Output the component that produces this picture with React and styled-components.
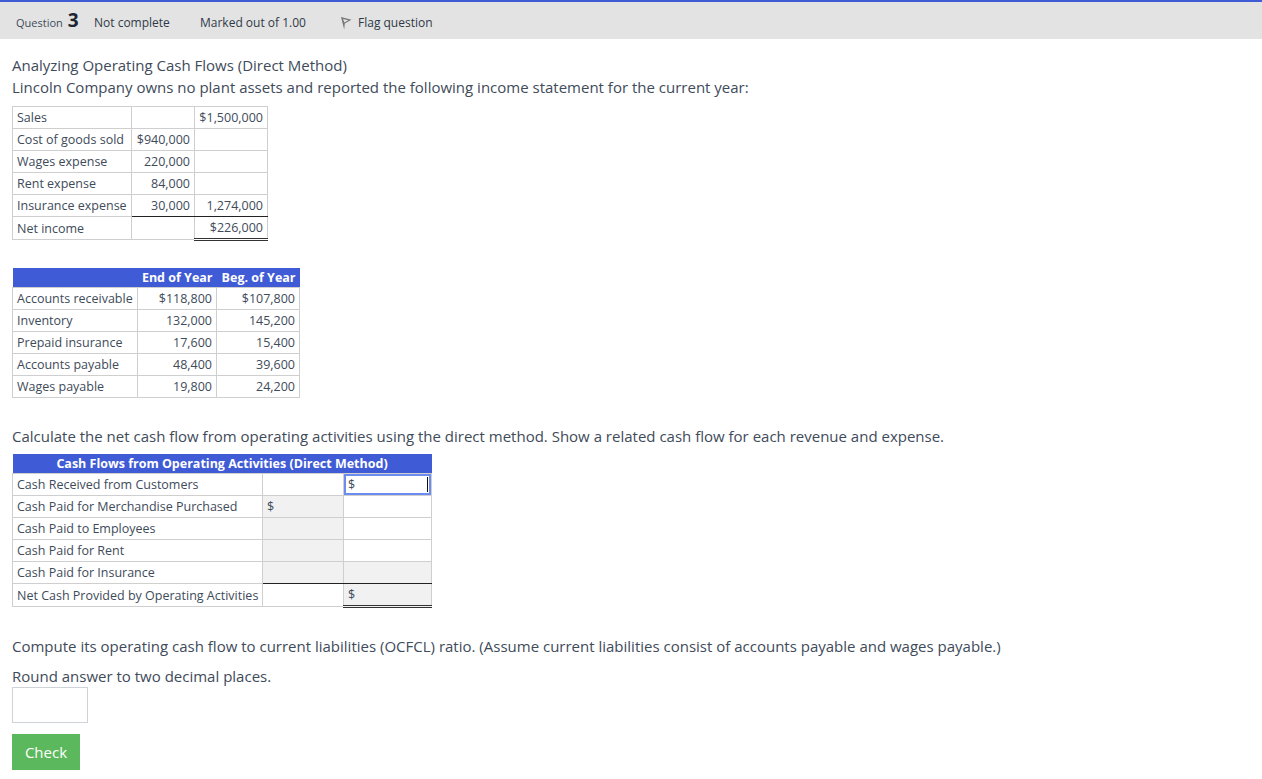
import styled, { createGlobalStyle } from "styled-components"

const Global = createGlobalStyle`
  html, body {
    margin: 0;
    padding: 0;
    background: #fff;
    font-family: "Open Sans", "Liberation Sans", sans-serif;
    color: #404b5a;
  }
`

const Page = styled.div`
  width: 1262px;
  height: 779px;
  overflow: hidden;
`

const InfoBar = styled.div`
  display: flex;
  align-items: center;
  height: 33px;
  padding: 4px 0 0 16px;
  background: #e3e3e3;
  border-top: 2px solid #3f5bd6;
  font-size: 12px;
  color: #2f3a48;
`

const QuestionLabel = styled.span`
  display: flex;
  align-items: baseline;
  gap: 5px;
  width: 78px;
  margin-bottom: 6px;
  font-size: 11px;
  color: #404b5a;
`

const QuestionNo = styled.b`
  font-size: 19px;
  font-weight: 700;
  color: #1d2530;
`

const BarItem = styled.span`
  width: ${p => p.$w}px;
`

const FlagWrap = styled.span`
  display: flex;
  align-items: center;
  gap: 6px;
`

const Content = styled.div`
  padding: 15px 12px 0;
`

const Para = styled.p`
  margin: ${p => p.$top || 0}px 0 0;
  font-size: 15px;
  line-height: 22px;
`

const Grid = styled.table`
  border-collapse: collapse;
  table-layout: fixed;
  width: ${p => p.$w}px;
  margin-top: ${p => p.$top || 0}px;
  font-size: 12.5px;
  line-height: 21px;
`

const Head = styled.th`
  height: 19px;
  padding: 0 4px;
  background: #3f5bd6;
  color: #fff;
  font-size: 12.5px;
  line-height: 19px;
  font-weight: 700;
  text-align: ${p => p.$align || "right"};
  white-space: nowrap;
`

const Cell = styled.td`
  height: 21px;
  padding: 0 4px;
  border: 1px solid #cfcfcf;
  border-bottom-style: ${p => (p.$total ? "double" : "solid")};
  border-bottom-width: ${p => (p.$total ? "3px" : "1px")};
  border-bottom-color: ${p => (p.$total ? "#333" : p.$sum ? "#222" : "#cfcfcf")};
  background: ${p => (p.$shade ? "#f1f1f1" : "#fff")};
  text-align: ${p => (p.$num ? "right" : "left")};
  white-space: nowrap;
`

const FocusCell = styled(Cell)`
  box-shadow: inset 0 0 0 2px #6d8cf0;
  position: relative;
`

const Caret = styled.span`
  position: absolute;
  right: 3px;
  top: 3px;
  bottom: 3px;
  width: 1px;
  background: #111;
`

const AnswerBox = styled.input`
  display: block;
  box-sizing: border-box;
  width: 76px;
  height: 36px;
  border: 1px solid #ced2d9;
  background: #fff;
`

const CheckButton = styled.button`
  display: block;
  width: 68px;
  height: 36px;
  margin-top: 11px;
  border: 0;
  background: #5cb85c;
  color: #fff;
  font-family: inherit;
  font-size: 15px;
`

const FlagIcon = () => (
  <svg width="12" height="14" viewBox="0 0 12 14">
    <path d="M1 1 L11.5 3.8 L4.8 7.5 L4.2 13.5 Z M3 3 L8.3 4.2 L4.4 6.4 Z" fill="#777" fillRule="evenodd" />
  </svg>
)

const income = [
  ["Sales", "", "$1,500,000"],
  ["Cost of goods sold", "$940,000", ""],
  ["Wages expense", "220,000", ""],
  ["Rent expense", "84,000", ""],
  ["Insurance expense", "30,000", "1,274,000"],
]

const balances = [
  ["Accounts receivable", "$118,800", "$107,800"],
  ["Inventory", "132,000", "145,200"],
  ["Prepaid insurance", "17,600", "15,400"],
  ["Accounts payable", "48,400", "39,600"],
  ["Wages payable", "19,800", "24,200"],
]

const App = () => (
  <Page>
    <Global />
    <InfoBar>
      <QuestionLabel>
        Question <QuestionNo>3</QuestionNo>
      </QuestionLabel>
      <BarItem $w={106}>Not complete</BarItem>
      <BarItem $w={140}>Marked out of 1.00</BarItem>
      <FlagWrap>
        <FlagIcon />
        Flag question
      </FlagWrap>
    </InfoBar>
    <Content>
      <Para>Analyzing Operating Cash Flows (Direct Method)</Para>
      <Para>Lincoln Company owns no plant assets and reported the following income statement for the current year:</Para>
      <Grid $w={255} $top={8}>
        <colgroup>
          <col width="119" />
          <col width="63" />
          <col width="73" />
        </colgroup>
        <tbody>
          {income.map((r, i) => (
            <tr key={i}>
              <Cell>{r[0]}</Cell>
              <Cell $num $sum={i === 4}>{r[1]}</Cell>
              <Cell $num $sum={i === 4}>{r[2]}</Cell>
            </tr>
          ))}
          <tr>
            <Cell>Net income</Cell>
            <Cell $num />
            <Cell $num $total>$226,000</Cell>
          </tr>
        </tbody>
      </Grid>
      <Grid $w={287} $top={27}>
        <colgroup>
          <col width="125" />
          <col width="79" />
          <col width="83" />
        </colgroup>
        <thead>
          <tr>
            <Head />
            <Head>End of Year</Head>
            <Head>Beg. of Year</Head>
          </tr>
        </thead>
        <tbody>
          {balances.map((r, i) => (
            <tr key={i}>
              <Cell>{r[0]}</Cell>
              <Cell $num>{r[1]}</Cell>
              <Cell $num>{r[2]}</Cell>
            </tr>
          ))}
        </tbody>
      </Grid>
      <Para $top={27}>Calculate the net cash flow from operating activities using the direct method. Show a related cash flow for each revenue and expense.</Para>
      <Grid $w={419} $top={7}>
        <colgroup>
          <col width="250" />
          <col width="81" />
          <col width="88" />
        </colgroup>
        <thead>
          <tr>
            <Head colSpan={3} $align="center">Cash Flows from Operating Activities (Direct Method)</Head>
          </tr>
        </thead>
        <tbody>
          <tr>
            <Cell>Cash Received from Customers</Cell>
            <Cell />
            <FocusCell>$<Caret /></FocusCell>
          </tr>
          <tr>
            <Cell>Cash Paid for Merchandise Purchased</Cell>
            <Cell $shade>$</Cell>
            <Cell />
          </tr>
          <tr>
            <Cell>Cash Paid to Employees</Cell>
            <Cell $shade />
            <Cell />
          </tr>
          <tr>
            <Cell>Cash Paid for Rent</Cell>
            <Cell $shade />
            <Cell />
          </tr>
          <tr>
            <Cell>Cash Paid for Insurance</Cell>
            <Cell $shade $sum />
            <Cell $shade $sum />
          </tr>
          <tr>
            <Cell>Net Cash Provided by Operating Activities</Cell>
            <Cell />
            <Cell $shade $total>$</Cell>
          </tr>
        </tbody>
      </Grid>
      <Para $top={27}>Compute its operating cash flow to current liabilities (OCFCL) ratio. (Assume current liabilities consist of accounts payable and wages payable.)</Para>
      <Para $top={8}>Round answer to two decimal places.</Para>
      <AnswerBox />
      <CheckButton>Check</CheckButton>
    </Content>
  </Page>
)

export default App
